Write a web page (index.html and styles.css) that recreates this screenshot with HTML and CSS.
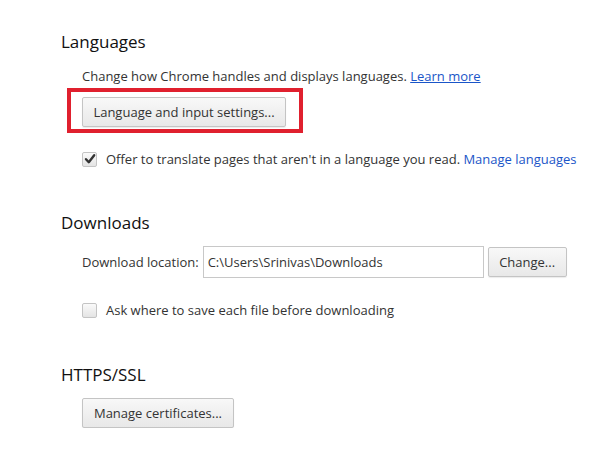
FILE: index.html
```html
<!DOCTYPE html>
<html>
<head>
<meta charset="utf-8">
<link rel="stylesheet" href="styles.css">
</head>
<body>
<div class="page">
  <section class="section">
    <h3 class="heading">Languages</h3>
    <div class="content">
      <div class="line">Change how Chrome handles and displays languages. <a class="link underline" href="#">Learn more</a></div>
      <div class="highlight">
        <button class="btn btn-lang">Language and input settings...</button>
      </div>
      <label class="check-row">
        <span class="checkbox checked"><svg viewBox="0 0 14 14" width="14" height="14"><path d="M3 7.2 L5.8 10.2 L11.2 3.2" fill="none" stroke="#333" stroke-width="2.4" stroke-linecap="round" stroke-linejoin="round"/></svg></span>
        <span>Offer to translate pages that aren't in a language you read. <a class="link" href="#">Manage languages</a></span>
      </label>
    </div>
  </section>
  <section class="section downloads">
    <h3 class="heading">Downloads</h3>
    <div class="content">
      <div class="loc-row">
        <span class="loc-label">Download location:</span>
        <span class="input">C:\Users\Srinivas\Downloads</span>
        <button class="btn btn-change">Change...</button>
      </div>
      <label class="check-row check2">
        <span class="checkbox"></span>
        <span>Ask where to save each file before downloading</span>
      </label>
    </div>
  </section>
  <section class="section https">
    <h3 class="heading">HTTPS/SSL</h3>
    <div class="content">
      <button class="btn btn-cert">Manage certificates...</button>
    </div>
  </section>
</div>
</body>
</html>
```
FILE: styles.css
```css
html, body {
  margin: 0;
  padding: 0;
  background: #fff;
}
body {
  font-family: "Open Sans", "Noto Sans", sans-serif;
  color: #333;
  font-size: 13px;
}
.page {
  padding: 30px 0 0 61px;
}
.section {
  display: block;
}
.heading {
  margin: 0;
  font-weight: normal;
  font-size: 17px;
  color: #111;
  line-height: 24px;
}
.content {
  padding-left: 21px;
}
.line {
  margin-top: 12px;
  line-height: 20px;
}
.link {
  color: #1a55c8;
  text-decoration: none;
}
.underline {
  text-decoration: underline;
}
.highlight {
  margin-left: -15px;
  width: 217px;
  height: 32px;
  border: 4px solid #e0202e;
  margin-top: 2px;
  padding: 5px 0 0 11px;
  box-sizing: content-box;
}
.btn {
  font-family: inherit;
  font-size: 13px;
  color: #333;
  background: linear-gradient(#f8f8f8, #e8e8e8);
  border: 1px solid #c4c4c4;
  border-radius: 2px;
  box-shadow: 0 1px 1px rgba(0,0,0,0.08);
  padding: 0;
  height: 30px;
  margin: 0;
  white-space: nowrap;
}
.btn-lang {
  width: 204px;
}
.check-row {
  display: flex;
  align-items: center;
  gap: 9px;
  margin-top: 16px;
  line-height: 20px;
}
.checkbox {
  width: 13px;
  height: 13px;
  border: 1px solid #c4c4c4;
  border-radius: 2px;
  background: linear-gradient(#fafafa, #e4e4e4);
  position: relative;
  flex: none;
}
.checkbox svg {
  position: absolute;
  left: 0;
  top: -1px;
}
.downloads {
  margin-top: 42px;
}
.loc-row {
  display: flex;
  align-items: center;
  margin-top: 11px;
}
.loc-label {
  margin-right: 4px;
}
.input {
  width: 275px;
  height: 30px;
  border: 1px solid #c8c8c8;
  padding-left: 4px;
  line-height: 30px;
  box-sizing: content-box;
  margin-right: 4px;
}
.btn-change {
  width: 79px;
}
.check2 {
  margin-top: 22px;
}
.https {
  margin-top: 43px;
}
.btn-cert {
  margin-top: 11px;
  width: 152px;
}
```
